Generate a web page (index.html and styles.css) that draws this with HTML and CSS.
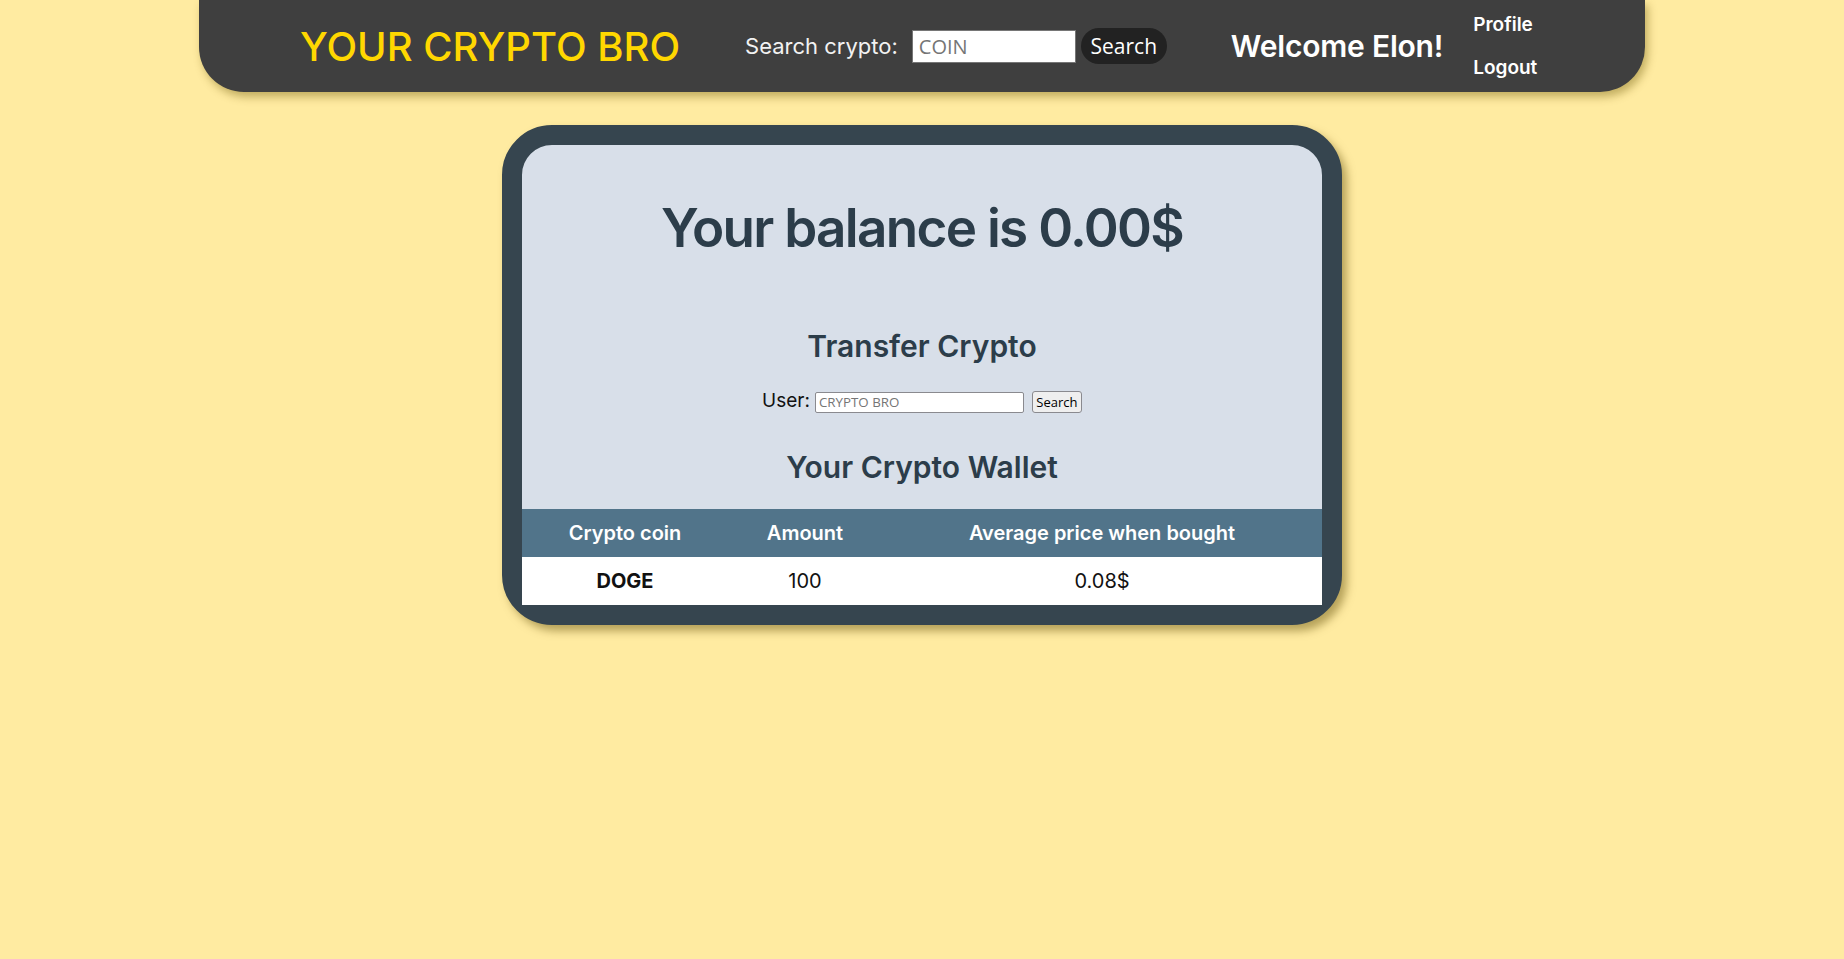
FILE: index.html
```html
<!DOCTYPE html>
<html lang="en">
<head>
<meta charset="utf-8">
<title>Your Crypto Bro</title>
<link rel="stylesheet" href="styles.css">
</head>
<body>
<header class="topbar">
  <div class="brand">YOUR CRYPTO BRO</div>
  <form class="search">
    <label class="search-label">Search crypto:</label>
    <input class="search-input" type="text" placeholder="COIN">
    <button class="search-btn" type="button">Search</button>
  </form>
  <div class="welcome">Welcome Elon!</div>
  <nav class="links">
    <a class="link" href="#">Profile</a>
    <a class="link" href="#">Logout</a>
  </nav>
</header>
<main class="card">
  <h1 class="balance">Your balance is 0.00$</h1>
  <h2 class="section-title transfer-title">Transfer Crypto</h2>
  <div class="transfer">
    <label class="user-label">User:</label>
    <input class="user-input" type="text" placeholder="CRYPTO BRO">
    <button class="user-btn" type="button">Search</button>
  </div>
  <h2 class="section-title wallet-title">Your Crypto Wallet</h2>
  <table class="wallet">
    <thead>
      <tr><th class="c1">Crypto coin</th><th class="c2">Amount</th><th class="c3">Average price when bought</th></tr>
    </thead>
    <tbody>
      <tr><td class="coin">DOGE</td><td>100</td><td>0.08$</td></tr>
    </tbody>
  </table>
</main>
</body>
</html>
```
FILE: styles.css
```css
* { box-sizing: border-box; }
body {
  margin: 0;
  background: #ffeba1;
  font-family: Inter, "Noto Sans", sans-serif;
  min-height: 959px;
}
.topbar {
  width: 1446px;
  height: 92px;
  margin: 0 auto;
  background: #3f3f3f;
  border-radius: 0 0 45px 45px;
  box-shadow: 3px 5px 8px rgba(120, 100, 20, 0.45);
  display: flex;
  align-items: center;
  padding-left: 101px;
}
.brand {
  color: #ffd700;
  font-size: 40px;
  font-weight: 500;
  white-space: nowrap;
}
.search {
  display: flex;
  align-items: center;
  margin-left: 65px;
}
.search-label {
  color: #f2f2f2;
  font-size: 22px;
  margin-right: 14px;
}
.search-input {
  width: 164px;
  height: 33px;
  border: 1px solid #767676;
  font-family: "Open Sans", sans-serif;
  font-size: 20px;
  padding: 0 6px;
  margin: 0;
}
.search-input::placeholder { color: #757575; }
.search-btn {
  height: 36px;
  width: 86px;
  margin-left: 5px;
  border: none;
  border-radius: 18px;
  background: #222222;
  color: #ffffff;
  font-family: "Open Sans", sans-serif;
  font-size: 21px;
  padding: 0;
}
.welcome {
  color: #ffffff;
  font-size: 30px;
  font-weight: 600;
  letter-spacing: -0.2px;
  margin-left: 64px;
  white-space: nowrap;
}
.links {
  display: flex;
  flex-direction: column;
  gap: 20px;
  margin-left: 30px;
}
.link {
  color: #ffffff;
  text-decoration: none;
  font-size: 19px;
  font-weight: 600;
  line-height: 23px;
}
.card {
  width: 840px;
  margin: 33px auto 0;
  border: 20px solid #36454f;
  border-radius: 50px;
  background: #d8dfe9;
  box-shadow: 5px 6px 9px rgba(110, 90, 20, 0.5);
  padding-top: 51px;
  color: #2c3d4a;
}
.balance {
  margin: 0;
  text-align: center;
  font-size: 53px;
  letter-spacing: -1.7px;
  line-height: 64px;
  font-weight: 600;
}
.section-title {
  margin: 0;
  text-align: center;
  font-size: 30px;
  line-height: 36px;
  font-weight: 600;
}
.transfer-title { margin-top: 68px; }
.transfer {
  display: flex;
  justify-content: center;
  align-items: center;
  height: 26px;
  margin-top: 25px;
}
.user-label {
  align-self: flex-start;
  font-size: 19px;
  line-height: 22px;
  padding-top: 1px;
  color: #111111;
  margin-right: 5px;
}
.user-input {
  width: 209px;
  height: 21px;
  border: 1px solid #8a8a8f;
  border-radius: 2px;
  font-family: "Open Sans", sans-serif;
  font-size: 13.33px;
  padding: 0 3px;
  margin: 0;
  background: #ffffff;
}
.user-input::placeholder { color: #757575; }
.user-btn {
  width: 50px;
  height: 22px;
  margin-left: 8px;
  border: 1px solid #8a8a8f;
  border-radius: 3px;
  background: #efefef;
  font-family: "Open Sans", sans-serif;
  font-size: 13px;
  color: #000;
  padding: 0;
}
.wallet-title { margin-top: 34px; }
.wallet {
  width: 800px;
  margin-top: 24px;
  border-collapse: collapse;
  table-layout: fixed;
}
.wallet .c1 { width: 206px; }
.wallet .c2 { width: 154px; }
.wallet th {
  background: #51748a;
  color: #ffffff;
  font-size: 20px;
  font-weight: 600;
  height: 48px;
  padding: 0;
  text-align: center;
}
.wallet td {
  background: #ffffff;
  color: #111111;
  font-size: 20px;
  height: 48px;
  padding: 0;
  text-align: center;
}
.wallet td.coin { font-weight: 700; }
```
